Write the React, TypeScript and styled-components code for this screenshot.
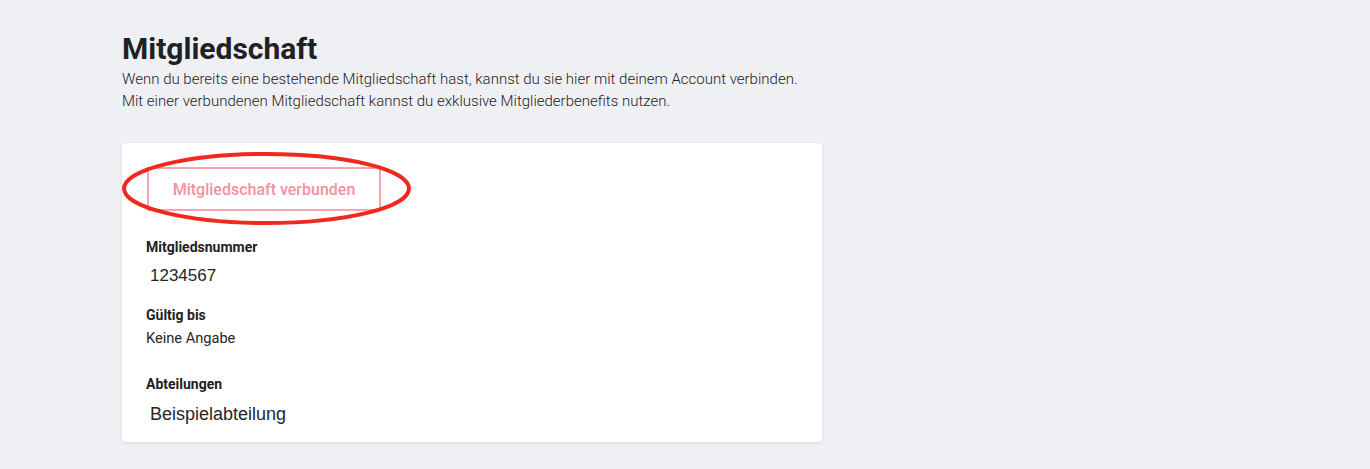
import React from 'react';
import styled, { createGlobalStyle } from 'styled-components';

const GlobalStyle = createGlobalStyle`
  html, body {
    margin: 0;
    padding: 0;
    background: #eff0f4;
    font-family: Roboto, "Liberation Sans", sans-serif;
    color: #212226;
  }
`;

const fields = [
  { key: 'nr', label: 'Mitgliedsnummer', value: '1234567', variant: 'input' },
  { key: 'valid', label: 'Gültig bis', value: 'Keine Angabe', variant: 'plain' },
  { key: 'dept', label: 'Abteilungen', value: 'Beispielabteilung', variant: 'large' },
] as const;

const App: React.FC = () => (
  <>
    <GlobalStyle />
    <Page>
      <Title>Mitgliedschaft</Title>
      <Intro>
        Wenn du bereits eine bestehende Mitgliedschaft hast, kannst du sie hier mit deinem Account verbinden.
        <br />
        Mit einer verbundenen Mitgliedschaft kannst du exklusive Mitgliederbenefits nutzen.
      </Intro>

      <Card>
        <Highlight width="291" height="75" viewBox="0 0 291 75">
          <ellipse cx="145.5" cy="37.5" rx="142.5" ry="34.5" fill="none" stroke="#ee2a1e" strokeWidth="4" />
        </Highlight>
        <ConnectedButton type="button" disabled>
          Mitgliedschaft verbunden
        </ConnectedButton>

        {fields.map(f => (
          <Field key={f.key} $variant={f.variant}>
            <Label>{f.label}</Label>
            <Value $variant={f.variant}>{f.value}</Value>
          </Field>
        ))}
      </Card>
    </Page>
  </>
);

const Page = styled.div`
  padding: 30px 0 0 122px;
  min-height: 469px;
  box-sizing: border-box;
`;

const Title = styled.h1`
  margin: 0;
  font-size: 30px;
  line-height: 38px;
  font-weight: 700;
  color: #202124;
`;

const Intro = styled.p`
  margin: 0;
  font-size: 15px;
  line-height: 22px;
  font-weight: 300;
  color: #1f2024;
`;

const Card = styled.div`
  position: relative;
  width: 700px;
  margin-top: 31px;
  padding: 24px 24px 17px;
  box-sizing: border-box;
  background: #fff;
  border-radius: 4px;
  box-shadow: 0 1px 3px rgba(0, 0, 0, 0.12);
`;

const Highlight = styled.svg`
  position: absolute;
  left: -1px;
  top: 8px;
  pointer-events: none;
`;

const ConnectedButton = styled.button`
  display: block;
  width: 234px;
  height: 44px;
  margin: 0 0 27px 1px;
  padding: 0;
  background: #fff;
  border: 2px solid #f6a4b0;
  font-family: Roboto, sans-serif;
  font-size: 16px;
  font-weight: 500;
  color: #f4919f;
  cursor: default;
`;

const Field = styled.div<{ $variant: string }>`
  margin-bottom: ${({ $variant }) => ($variant === 'plain' ? '27px' : '20px')};
  &:last-child {
    margin-bottom: 0;
  }
`;

const Label = styled.div`
  font-size: 14px;
  line-height: 18px;
  font-weight: 700;
  color: #1f2023;
`;

const Value = styled.div<{ $variant: string }>`
  margin-top: ${({ $variant }) => ($variant === 'plain' ? '4px' : '10px')};
  padding-left: ${({ $variant }) => ($variant === 'plain' ? '0' : '4px')};
  font-family: ${({ $variant }) => ($variant === 'plain' ? 'Roboto, sans-serif' : '"Liberation Sans", Arial, sans-serif')};
  font-size: ${({ $variant }) => ($variant === 'large' ? '18px' : $variant === 'input' ? '17px' : '14.6px')};
  line-height: ${({ $variant }) => ($variant === 'large' ? '22px' : '20px')};
  color: #25262a;
`;

export default App;
